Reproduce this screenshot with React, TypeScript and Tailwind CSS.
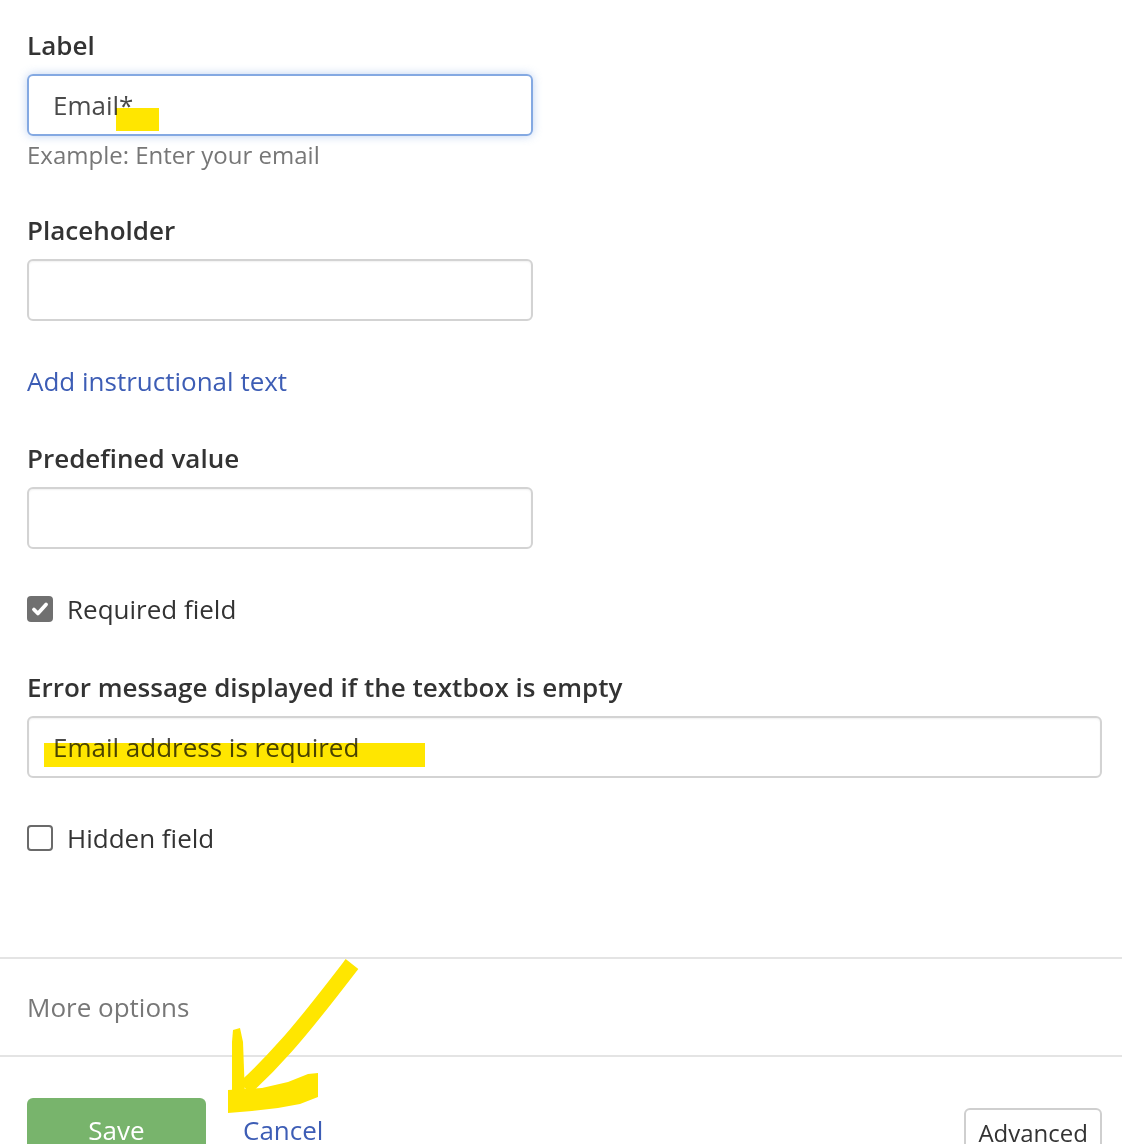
import React from "react";

function FieldLabel({ children }: { children: React.ReactNode }) {
  return <div className="font-semibold text-[#333]">{children}</div>;
}

function TextBox({
  value,
  focused,
  wide,
}: {
  value?: string;
  focused?: boolean;
  wide?: boolean;
}) {
  return (
    <div
      className={`mt-[11px] h-[62px] rounded-[6px] border-2 px-[24px] py-[11px] text-[#4a4a4a] ${
        wide ? "w-full" : "w-[506px]"
      } ${
        focused
          ? "border-[#84a9e2] shadow-[0_0_10px_rgba(110,155,225,0.45)]"
          : "border-[#d3d3d3] shadow-[inset_0_1px_2px_rgba(0,0,0,0.06)]"
      }`}
    >
      {value}
    </div>
  );
}

function Checkbox({ checked, label }: { checked?: boolean; label: string }) {
  return (
    <div className="flex items-center gap-[14px] text-[#333]">
      {checked ? (
        <span className="flex h-[26px] w-[26px] items-center justify-center rounded-[4px] bg-[#707070]">
          <svg viewBox="0 0 20 20" className="h-[22px] w-[22px]">
            <path
              d="M4.5 10.5l3.6 3.6 7.4-8.2"
              fill="none"
              stroke="#fff"
              strokeWidth="3.4"
              strokeLinecap="round"
              strokeLinejoin="round"
            />
          </svg>
        </span>
      ) : (
        <span className="h-[26px] w-[26px] rounded-[4px] border-2 border-[#6a6a6a] bg-white" />
      )}
      <span>{label}</span>
    </div>
  );
}

export default function App() {
  return (
    <div className="relative min-h-screen overflow-hidden bg-white font-['Open_Sans',sans-serif] text-[26px] leading-[36px]">
      <div className="pl-[27px] pr-[20px] pt-[27px]">
        <FieldLabel>Label</FieldLabel>
        <TextBox value="Email*" focused />
        <div className="mt-[1px] text-[24px] text-[#777]">Example: Enter your email</div>

        <div className="mt-[39px]">
          <FieldLabel>Placeholder</FieldLabel>
        </div>
        <TextBox />

        <div className="mt-[42px]">
          <a href="#" className="text-[#3d5db5]">
            Add instructional text
          </a>
        </div>

        <div className="mt-[41px]">
          <FieldLabel>Predefined value</FieldLabel>
        </div>
        <TextBox />

        <div className="mt-[42px]">
          <Checkbox checked label="Required field" />
        </div>

        <div className="mt-[42px]">
          <FieldLabel>Error message displayed if the textbox is empty</FieldLabel>
        </div>
        <TextBox value="Email address is required" wide />

        <div className="mt-[42px]">
          <Checkbox label="Hidden field" />
        </div>
      </div>

      <div className="mt-[101px] border-y-2 border-[#e4e4e4] py-[30px] pl-[27px] text-[#777]">
        More options
      </div>

      <div className="flex items-start pl-[27px] pr-[20px] pt-[41px]">
        <button className="w-[179px] rounded-[6px] bg-[#78b46c] py-[14px] text-white">
          Save
        </button>
        <a href="#" className="ml-[37px] mt-[14px] text-[#3d5db5]">
          Cancel
        </a>
        <button className="ml-auto mt-[10px] rounded-[6px] border-2 border-[#cfcfcf] bg-white px-[12px] py-[5px] text-[24px] text-[#333]">
          Advanced
        </button>
      </div>

      {/* marker scribbles on top of the form */}
      <div className="pointer-events-none absolute left-[116px] top-[108px] h-[23px] w-[43px] bg-[#ffe600] mix-blend-multiply" />
      <div className="pointer-events-none absolute left-[44px] top-[743px] h-[24px] w-[381px] bg-[#ffe600] mix-blend-multiply" />
      <svg
        className="pointer-events-none absolute left-0 top-0 h-[1144px] w-[1122px]"
        viewBox="0 0 1122 1144"
      >
        <path
          d="M352 964 C332 990 306 1024 286 1046 C270 1064 258 1076 245 1088"
          fill="none"
          stroke="#ffe600"
          strokeWidth="16"
        />
        <path
          d="M233 1030 L240 1028 L243 1042 L245 1096 L232 1098 L232 1042 Z"
          fill="#ffe600"
        />
        <path
          d="M228 1090 L262 1088 L288 1082 L308 1074 L318 1073 L318 1097 L300 1104 L278 1108 L252 1111 L228 1113 Z"
          fill="#ffe600"
        />
      </svg>
    </div>
  );
}
